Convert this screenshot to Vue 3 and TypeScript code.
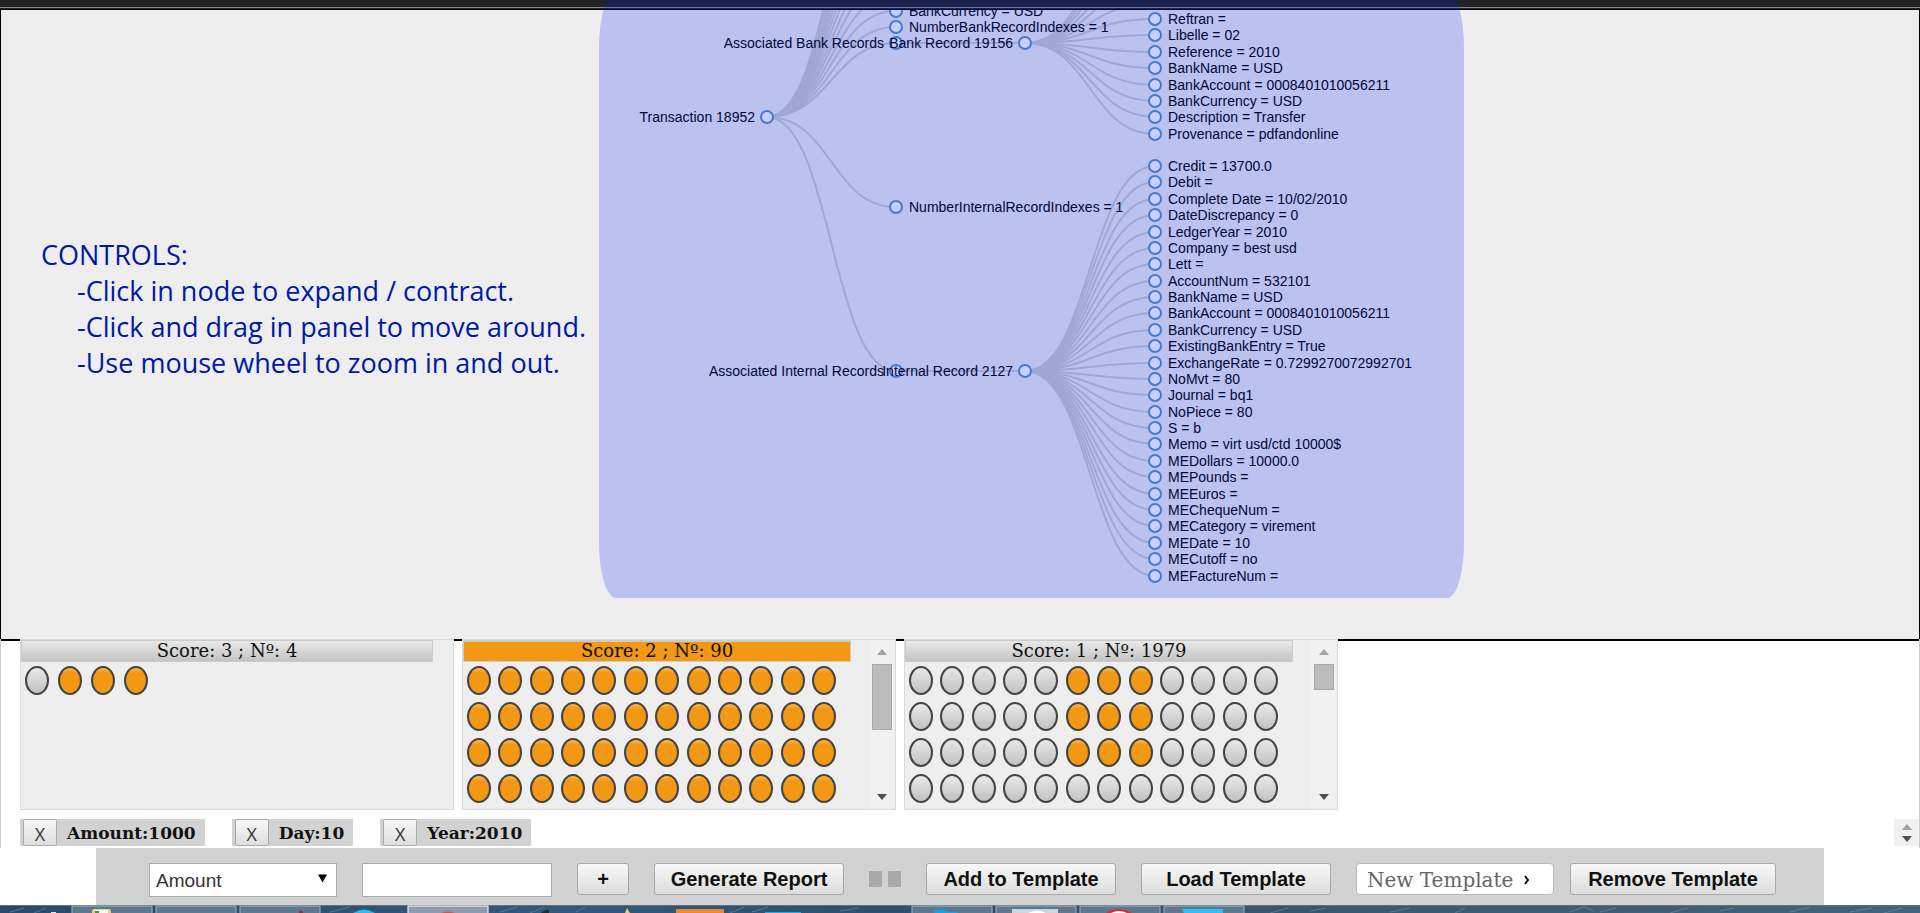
<script setup lang="ts">
import { ref } from 'vue'

interface TreeNode {
  x: number
  y: number
  label: string
  side: 'start' | 'end'
}
interface Link {
  d: string
}
interface Bucket {
  title: string
  active: boolean
  scroll: number
  dots: boolean[]
}

const COLS = [767, 896, 1025, 1155]
const STEP = 16.38

const bankFields = [
  'Reftran =', 'Libelle = 02', 'Reference = 2010', 'BankName = USD',
  'BankAccount = 0008401010056211', 'BankCurrency = USD',
  'Description = Transfer', 'Provenance = pdfandonline',
]
const internalFields = [
  'Credit = 13700.0', 'Debit =', 'Complete Date = 10/02/2010', 'DateDiscrepancy = 0',
  'LedgerYear = 2010', 'Company = best usd', 'Lett =', 'AccountNum = 532101',
  'BankName = USD', 'BankAccount = 0008401010056211', 'BankCurrency = USD',
  'ExistingBankEntry = True', 'ExchangeRate = 0.7299270072992701', 'NoMvt = 80',
  'Journal = bq1', 'NoPiece = 80', 'S = b', 'Memo = virt usd/ctd 10000$',
  'MEDollars = 10000.0', 'MEPounds =', 'MEEuros =', 'MEChequeNum =',
  'MECategory = virement', 'MEDate = 10', 'MECutoff = no', 'MEFactureNum =',
]

const row = (base: number, i: number): number => Math.round(base + i * STEP)
const link = (x1: number, y1: number, x2: number, y2: number): Link => {
  const mid = (x1 + x2) / 2
  return { d: `M${x1},${y1}C${mid},${y1} ${mid},${y2} ${x2},${y2}` }
}

const root: TreeNode = { x: COLS[0], y: 117, label: 'Transaction 18952', side: 'end' }
const bank: TreeNode = { x: COLS[1], y: 43, label: 'Associated Bank Records', side: 'end' }
const bankRecord: TreeNode = { x: COLS[2], y: 43, label: 'Bank Record 19156', side: 'end' }
const internal: TreeNode = { x: COLS[1], y: 371, label: 'Associated Internal Records', side: 'end' }
const internalRecord: TreeNode = { x: COLS[2], y: 371, label: 'Internal Record 2127', side: 'end' }
const middle: TreeNode[] = [
  { x: COLS[1], y: 11, label: 'BankCurrency = USD', side: 'start' },
  { x: COLS[1], y: 27, label: 'NumberBankRecordIndexes = 1', side: 'start' },
  { x: COLS[1], y: 207, label: 'NumberInternalRecordIndexes = 1', side: 'start' },
]
const bankLeaves: TreeNode[] = bankFields.map((label, i) => ({ x: COLS[3], y: row(19, i), label, side: 'start' }))
const internalLeaves: TreeNode[] = internalFields.map((label, i) => ({ x: COLS[3], y: row(166, i), label, side: 'start' }))
const nodes: TreeNode[] = [root, bank, internal, ...middle, bankRecord, internalRecord, ...bankLeaves, ...internalLeaves]

const links: Link[] = [
  ...Array.from({ length: 11 }, (_, i) => link(root.x, root.y, COLS[1], row(11, -1 - i))),
  ...[...middle, bank, internal].map((n) => link(root.x, root.y, n.x, n.y)),
  link(bank.x, bank.y, bankRecord.x, bankRecord.y),
  link(internal.x, internal.y, internalRecord.x, internalRecord.y),
  ...Array.from({ length: 6 }, (_, i) => link(bankRecord.x, bankRecord.y, COLS[3], row(19, -1 - i))),
  ...bankLeaves.map((n) => link(bankRecord.x, bankRecord.y, n.x, n.y)),
  ...internalLeaves.map((n) => link(internalRecord.x, internalRecord.y, n.x, n.y)),
]

const buckets: Bucket[] = [
  { title: 'Score: 3 ; Nº: 4', active: false, scroll: 0, dots: [false, true, true, true] },
  { title: 'Score: 2 ; Nº: 90', active: true, scroll: 66, dots: Array.from({ length: 48 }, () => true) },
  {
    title: 'Score: 1 ; Nº: 1979',
    active: false,
    scroll: 26,
    dots: Array.from({ length: 48 }, (_, i) => i < 36 && i % 12 >= 5 && i % 12 <= 7),
  },
]

const filters = ref<string[]>(['Amount:1000', 'Day:10', 'Year:2010'])
const removeFilter = (i: number): void => {
  filters.value.splice(i, 1)
}
const field = ref('Amount')
const query = ref('')

const taskButtons = [72, 156, 240, 912, 996, 1080, 1164]
</script>

<template>
  <div class="page">
    <div class="topbar"></div>
    <main class="stage">
      <svg class="tree" role="img" aria-label="Transaction tree">
        <path v-for="(l, i) in links" :key="'l' + i" class="link" :d="l.d" />
        <g v-for="(n, i) in nodes" :key="'n' + i">
          <circle class="node" :cx="n.x" :cy="n.y" r="6" />
          <text
            class="label"
            :x="n.side === 'start' ? n.x + 13 : n.x - 12"
            :y="n.y + 5"
            :text-anchor="n.side"
          >{{ n.label }}</text>
        </g>
      </svg>
      <section class="help">
        <p>CONTROLS:</p>
        <ul>
          <li>-Click in node to expand / contract.</li>
          <li>-Click and drag in panel to move around.</li>
          <li>-Use mouse wheel to zoom in and out.</li>
        </ul>
      </section>
    </main>
    <div class="highlight"></div>

    <section class="deck">
      <article v-for="b in buckets" :key="b.title" class="bucket">
        <div class="content" :class="{ scrolled: b.scroll > 0 }">
          <h2 :class="{ active: b.active }">{{ b.title }}</h2>
          <div class="dots">
            <button
              v-for="(on, i) in b.dots"
              :key="i"
              type="button"
              class="dot"
              :class="{ on }"
              :aria-label="'Record ' + (i + 1)"
            ></button>
          </div>
        </div>
        <div v-if="b.scroll > 0" class="scrollbar">
          <span class="up"></span>
          <span class="thumb" :style="{ height: b.scroll + 'px' }"></span>
          <span class="down"></span>
        </div>
      </article>
    </section>

    <section class="filters">
      <div v-for="(f, i) in filters" :key="f" class="tag">
        <button type="button" :aria-label="'Remove ' + f" @click="removeFilter(i)">X</button>
        <strong>{{ f }}</strong>
      </div>
      <div class="stepper"><span class="up"></span><span class="down"></span></div>
    </section>

    <form class="toolbar" @submit.prevent>
      <div class="select">
        <select v-model="field" aria-label="Field">
          <option>Amount</option>
          <option>Day</option>
          <option>Year</option>
        </select>
        <svg class="caret" viewBox="0 0 10 9"><path d="M0 0h10L5 9z" /></svg>
      </div>
      <input v-model="query" class="query" type="text" aria-label="Value" />
      <button type="button" class="btn plus">+</button>
      <button type="button" class="btn wide">Generate Report</button>
      <div class="marks"><i></i><i></i></div>
      <button type="button" class="btn wide">Add to Template</button>
      <button type="button" class="btn wide">Load Template</button>
      <div class="pair">
        <button type="button" class="new">
          <span>New Template</span>
          <svg viewBox="0 0 8 12"><path d="M2 2l3 4-3 4" /></svg>
        </button>
        <button type="button" class="btn remove">Remove Template</button>
      </div>
    </form>

    <svg class="taskbar" viewBox="0 0 1920 8" preserveAspectRatio="none" aria-hidden="true">
      <defs>
        <linearGradient id="sea" x1="0" x2="1" y1="0" y2="0">
          <stop offset="0" stop-color="#2c4a68" />
          <stop offset="0.3" stop-color="#33587a" />
          <stop offset="0.5" stop-color="#2f4d68" />
          <stop offset="0.75" stop-color="#3c5a70" />
          <stop offset="1" stop-color="#43647b" />
        </linearGradient>
      </defs>
      <rect width="1920" height="8" fill="url(#sea)" />
      <path
        class="wave"
        d="M10 7l14-4M34 8l12-5M330 7l20-5M500 7l18-5M530 8l14-6M576 7l9-5M730 8l14-6M752 7l16-5M840 6l18-3M1270 8l18-5M1310 6l16-3M1390 7l20-4M1455 8l10-5M1570 7l14-5 10 4M1600 7l16-4M1670 8l18-5M1720 6l14-3M1790 7l20-5M1850 7l22-4M1884 8l18-5"
      />
      <rect width="1920" height="1" fill="#5c7284" />
      <g v-for="x in taskButtons" :key="x">
        <rect :x="x" y="1" width="80" height="9" fill="#60788e" stroke="#9fb0bf" />
      </g>
      <rect x="408" y="1" width="80" height="9" fill="#8c9dae" stroke="#fff" />
      <path d="M92 8V6q0-2 2-2h15q2 0 2 2v2z" fill="#e9cf78" />
      <path d="M95 5h13v3H95z" fill="#f6fbf0" />
      <path d="M95 6h4v2h-4z" fill="#3d9a4b" />
      <path d="M51 7h5v1h-5z" fill="#dfe7ec" />
      <path d="M299 6h4v2h-4z" fill="#8c3434" />
      <path d="M353 8q11-7 22 0z" fill="#2fb9ee" />
      <path d="M441 8q7-3 14 0z" fill="#e0503c" />
      <path d="M541 8l4-3h4v3z" fill="#222d36" />
      <path d="M625 8l2-5 3 5z" fill="#e2ce78" />
      <path d="M676 8V5q0-1 1-1h46q1 0 1 1v3z" fill="#ef8a2c" />
      <path d="M765 7h36v1h-36z" fill="#20a8ec" />
      <path d="M934 8q0-3 3-3h7l4 2h10v1z" fill="#10a6ea" />
      <path d="M1012 8V4h46v4z" fill="#cfd5d8" />
      <path d="M1028 8q9-5 18 0z" fill="#fff" />
      <path d="M1106 8q12-8 26 0z" fill="#d92e2e" />
      <path d="M1111 8q8-4 16 0z" fill="#fff" />
      <path d="M1182 4h41v4h-39z" fill="#2fc0f5" />
    </svg>
  </div>
</template>

<style>
body {
  margin: 0;
  background: #fff;
}
</style>

<style scoped>
* {
  box-sizing: border-box;
}
.page {
  position: relative;
  display: flex;
  flex-direction: column;
  min-height: 100vh;
  overflow: hidden;
  font-family: 'Liberation Sans', Arial, sans-serif;
}
.topbar {
  height: 9px;
  background: linear-gradient(#222 7px, #8a8a8a 7px, #8a8a8a 8px, #222 8px);
}
.stage {
  position: relative;
  flex: 1 0 auto;
  display: flex;
  align-items: center;
  border: solid #000;
  border-width: 1px 1px 2px;
  background: #eee;
  overflow: hidden;
}
.tree {
  position: absolute;
  left: -1px;
  top: -10px;
  width: 1920px;
  height: 640px;
}
.link {
  fill: none;
  stroke: #ccc;
  stroke-width: 2;
}
.node {
  fill: #fff;
  stroke: #5a92c4;
  stroke-width: 2;
}
.label {
  font-size: 14px;
  fill: #000;
}
.help {
  padding: 0 40px 32px;
  color: #0019a5;
  font-family: 'Open Sans', 'Noto Sans', sans-serif;
  font-size: 27px;
  line-height: 36px;
}
.help p,
.help ul {
  margin: 0;
}
.help ul {
  padding-left: 36px;
  list-style: none;
}
.highlight {
  position: absolute;
  left: 599px;
  top: -8px;
  width: 865px;
  height: 606px;
  border-radius: 17px / 55px;
  background: rgba(0, 33, 247, 0.21);
  pointer-events: none;
}
.deck {
  position: relative;
  display: flex;
  gap: 8px;
  margin-top: -2px;
  padding: 0 20px 0 19px;
  background: linear-gradient(transparent 2px, #fff 2px);
  border: solid #ccc;
  border-width: 0 1px;
}
.bucket {
  flex: 0 1 434px;
  display: flex;
  height: 171px;
  border: 1px solid #d9d9d9;
  background: #eee;
}
.content {
  flex: 1;
}
.content h2 {
  margin: 0 20px 0 0;
  height: 22px;
  border: 1px solid #ccc;
  background: linear-gradient(#e9e9e9, #c3c3c3);
  color: #111;
  font: 400 18px/20px 'DejaVu Serif', serif;
  text-align: center;
}
.content.scrolled h2 {
  margin-right: 18px;
}
.content h2.active {
  border-top-width: 2px;
  background: #f39814;
  line-height: 18px;
}
.dots {
  display: flex;
  gap: 9px;
  padding: 4px 4px 0;
}
.scrolled .dots {
  display: grid;
  grid-template-columns: repeat(12, 1fr);
  justify-items: center;
  gap: 7px 0;
  padding: 4px 29px 0 0;
}
.dot {
  width: 24px;
  height: 29px;
  padding: 0;
  border: 2px solid #444;
  border-radius: 50%;
  background: linear-gradient(#e8e8e8, #c2c2c2);
}
.dot.on {
  background: linear-gradient(#ffb650, #f39814 5px);
}
.scrollbar {
  display: flex;
  flex-direction: column;
  align-items: center;
  width: 26px;
  padding: 9px 0;
  background: #f1f1f1;
}
.thumb {
  width: 20px;
  margin-top: 9px;
  border: 1px solid #a8a8a8;
  background: #bcbcbc;
}
.up,
.down {
  border: solid transparent;
  border-width: 0 5px;
}
.up {
  border-bottom: 6px solid #a3a3a3;
}
.down {
  border-top: 6px solid #505050;
}
.scrollbar .down {
  margin-top: auto;
}
.filters {
  display: flex;
  gap: 27px;
  padding: 9px 0 2px 19px;
  border: solid #ccc;
  border-width: 0 1px;
}
.tag {
  display: flex;
  align-items: center;
  gap: 10px;
  height: 27px;
  padding: 0 9px 0 3px;
  background: #d2d2d2;
}
.tag button {
  width: 34px;
  height: 27px;
  padding: 2px 0 0;
  border: 1px solid #aaa;
  border-radius: 2px;
  background: linear-gradient(#f8f8f8, #dedede);
  color: #333;
  font: 400 18px/20px 'Open Sans', sans-serif;
}
.tag strong {
  color: #111;
  font: 700 17px/20px 'DejaVu Serif', serif;
}
.stepper {
  display: flex;
  flex-direction: column;
  align-items: center;
  justify-content: center;
  gap: 6px;
  width: 25px;
  height: 27px;
  margin-left: auto;
  background: #f1f1f1;
}
.toolbar {
  display: flex;
  align-items: flex-start;
  gap: 25px;
  height: 57px;
  margin: 0 5%;
  padding: 15px 0 0 53px;
  background: #d2d2d2;
}
.select {
  position: relative;
}
.select select,
.query {
  height: 34px;
  border: 1px solid #aaa;
  border-radius: 0;
  background: #fff;
  color: #333;
  font: 400 19px/30px 'Liberation Sans', Arial, sans-serif;
}
.select select {
  width: 188px;
  padding: 2px 0 0 6px;
  appearance: none;
}
.query {
  width: 190px;
  padding: 0 6px;
}
.caret {
  position: absolute;
  right: 10px;
  top: 11px;
  width: 9px;
  height: 9px;
  fill: #000;
  pointer-events: none;
}
.btn {
  height: 32px;
  padding: 0;
  border: 1px solid #a9a9a9;
  border-radius: 3px;
  background: linear-gradient(#f8f8f8, #dcdcdc);
  color: #111;
  font: 700 20px/28px 'Liberation Sans', Arial, sans-serif;
  white-space: nowrap;
}
.plus {
  width: 52px;
}
.wide {
  width: 190px;
}
.marks {
  display: flex;
  gap: 6px;
  padding-top: 8px;
}
.marks i {
  width: 13px;
  height: 16px;
  background: #a9a9a9;
}
.pair {
  display: flex;
  gap: 16px;
}
.new {
  display: flex;
  align-items: center;
  gap: 10px;
  width: 198px;
  height: 32px;
  padding: 2px 0 0 10px;
  border: 1px solid #bbb;
  border-radius: 4px;
  background: #fff;
  color: #666;
  font: 400 20px/28px 'DejaVu Serif', serif;
  white-space: nowrap;
}
.new svg {
  width: 8px;
  height: 12px;
  fill: none;
  stroke: #111;
  stroke-width: 2;
}
.remove {
  width: 206px;
}
.taskbar {
  display: block;
  width: 100%;
  height: 8px;
}
.wave {
  fill: none;
  stroke: #7f9cb2;
  stroke-opacity: 0.5;
}
</style>
